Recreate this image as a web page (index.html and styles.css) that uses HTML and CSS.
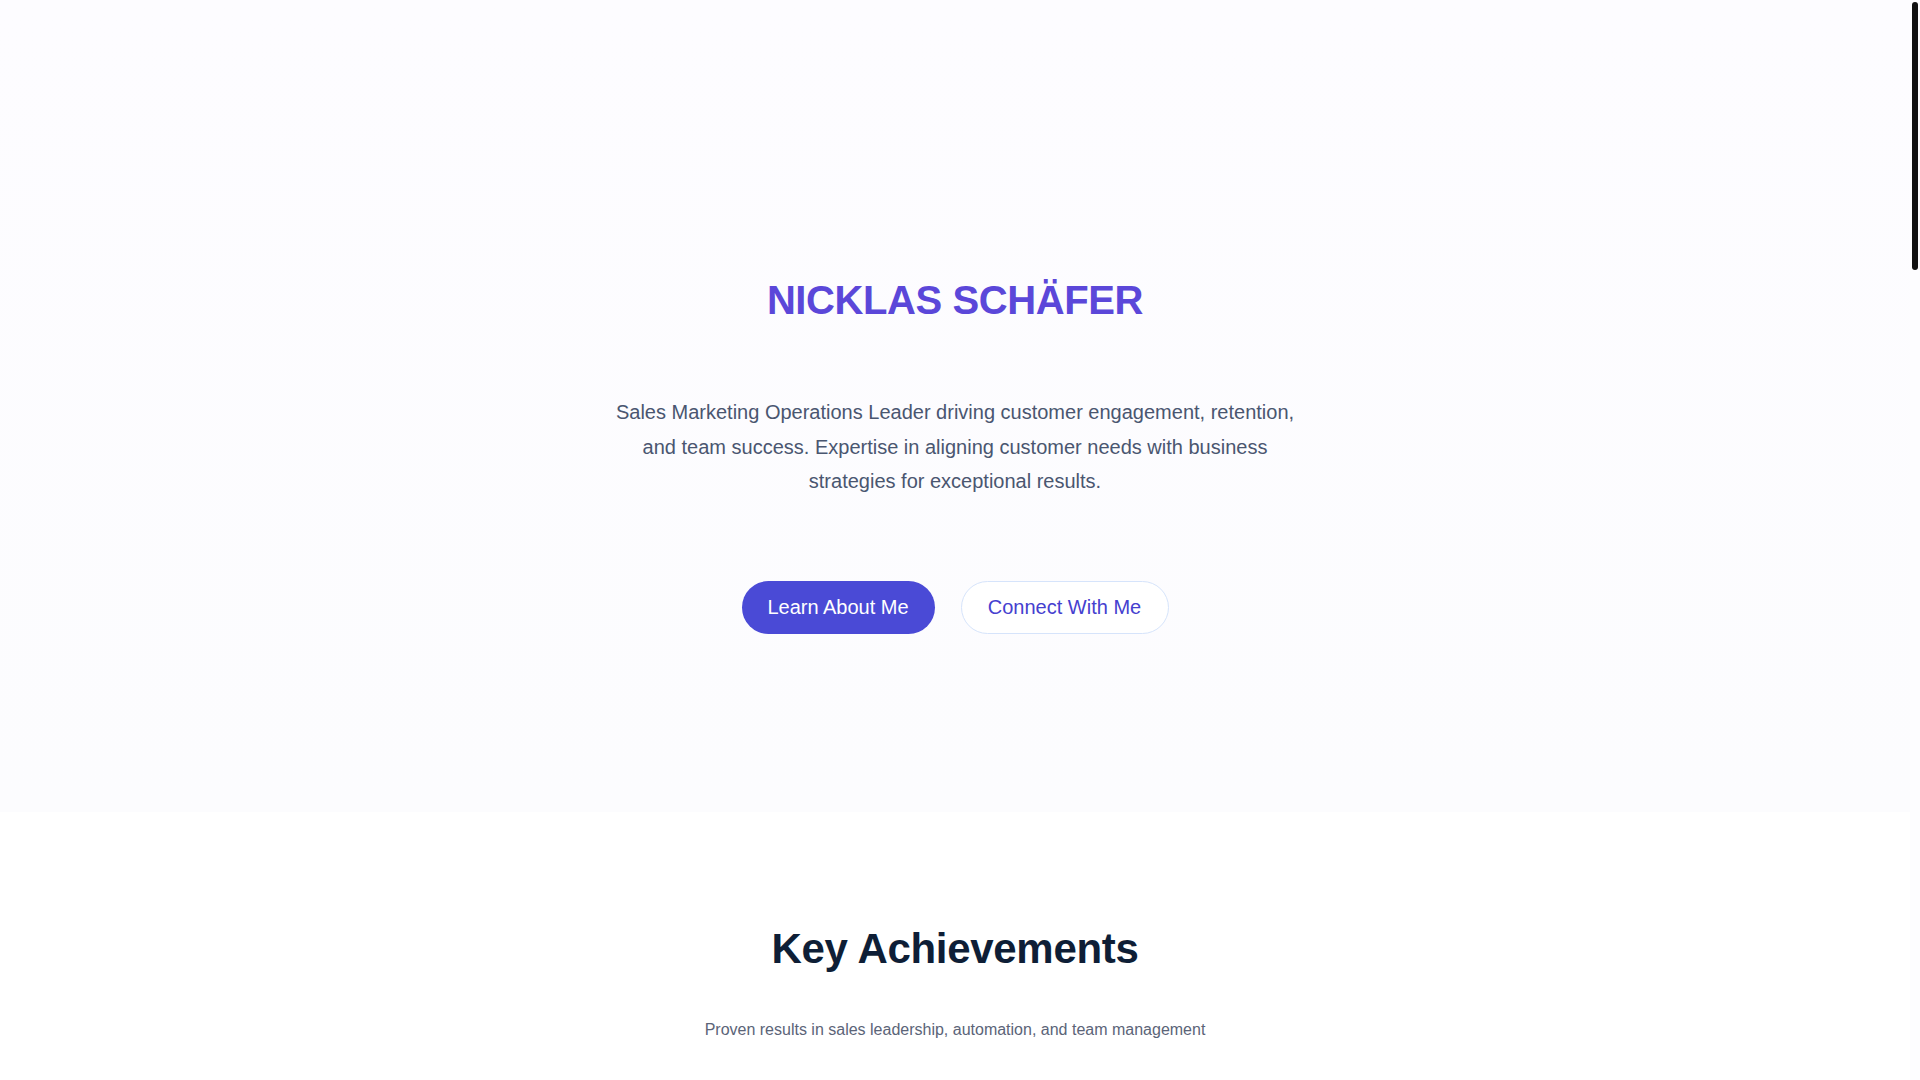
FILE: index.html
```html
<!DOCTYPE html>
<html lang="en">
<head>
<meta charset="utf-8">
<title>Nicklas Schäfer</title>
<link rel="stylesheet" href="styles.css">
</head>
<body>
<div class="layout">
  <main class="page">
    <section class="hero">
      <div class="hero-inner">
        <h1 class="hero-title">NICKLAS SCHÄFER</h1>
        <p class="hero-text">Sales Marketing Operations Leader driving customer engagement, retention, and team success. Expertise in aligning customer needs with business strategies for exceptional results.</p>
        <div class="hero-actions">
          <a class="btn btn-primary" href="#about">Learn About Me</a>
          <a class="btn btn-outline" href="#connect">Connect With Me</a>
        </div>
      </div>
    </section>
    <section class="achievements">
      <h2 class="section-title">Key Achievements</h2>
      <p class="section-sub">Proven results in sales leadership, automation, and team management</p>
    </section>
  </main>
  <div class="rail" aria-hidden="true"><div class="thumb"></div></div>
</div>
</body>
</html>
```

FILE: styles.css
```css
html, body {
  margin: 0;
  height: 100%;
  overflow: hidden;
}

body {
  font-family: "Liberation Sans", Arial, sans-serif;
  background: #ffffff;
  color: #0f1e34;
}

.layout {
  display: flex;
  height: 100vh;
  overflow: hidden;
}

.page {
  flex: 1;
  min-width: 0;
  background: #ffffff;
}

.rail {
  width: 10px;
  flex: 0 0 10px;
  background: #fdfdff;
  display: flex;
  justify-content: center;
  align-items: flex-start;
}

.thumb {
  width: 6px;
  height: 268px;
  margin-top: 2px;
  border-radius: 3px;
  background: #111111;
}

.hero {
  height: 812px;
  background: linear-gradient(180deg, #fdfcff 0%, #fcfcfe 100%);
  display: flex;
  justify-content: center;
}

.hero-inner {
  padding-top: 276px;
  display: flex;
  flex-direction: column;
  align-items: center;
}

.hero-title {
  margin: 0;
  font-size: 40px;
  line-height: 48px;
  font-weight: 700;
  letter-spacing: -0.4px;
  color: #5b47d9;
}

.hero-text {
  margin: 71px 0 0;
  width: 700px;
  text-align: center;
  font-size: 20px;
  line-height: 34.5px;
  color: #4a5670;
}

.hero-actions {
  margin-top: 82px;
  display: flex;
  gap: 26px;
}

.btn {
  display: inline-block;
  padding: 12px 24px;
  font-size: 20px;
  line-height: 29px;
  border-radius: 999px;
  text-decoration: none;
}

.btn-primary {
  background: #4a4ad6;
  color: #ffffff;
  border: 0;
  min-width: 145px;
  text-align: center;
}

.btn-outline {
  background: #ffffff;
  color: #4540cf;
  border: 1px solid #d6e4fb;
  padding: 11px 23px;
  min-width: 160px;
  text-align: center;
}

.achievements {
  height: 3540px;
  padding-top: 113px;
  box-sizing: border-box;
  text-align: center;
  background: #ffffff;
}

.section-title {
  margin: 0;
  font-size: 42px;
  line-height: 48px;
  font-weight: 700;
  letter-spacing: -0.3px;
  color: #0e1e36;
}

.section-sub {
  margin: 45px 0 0;
  font-size: 16px;
  line-height: 24px;
  color: #5b6478;
}
```
